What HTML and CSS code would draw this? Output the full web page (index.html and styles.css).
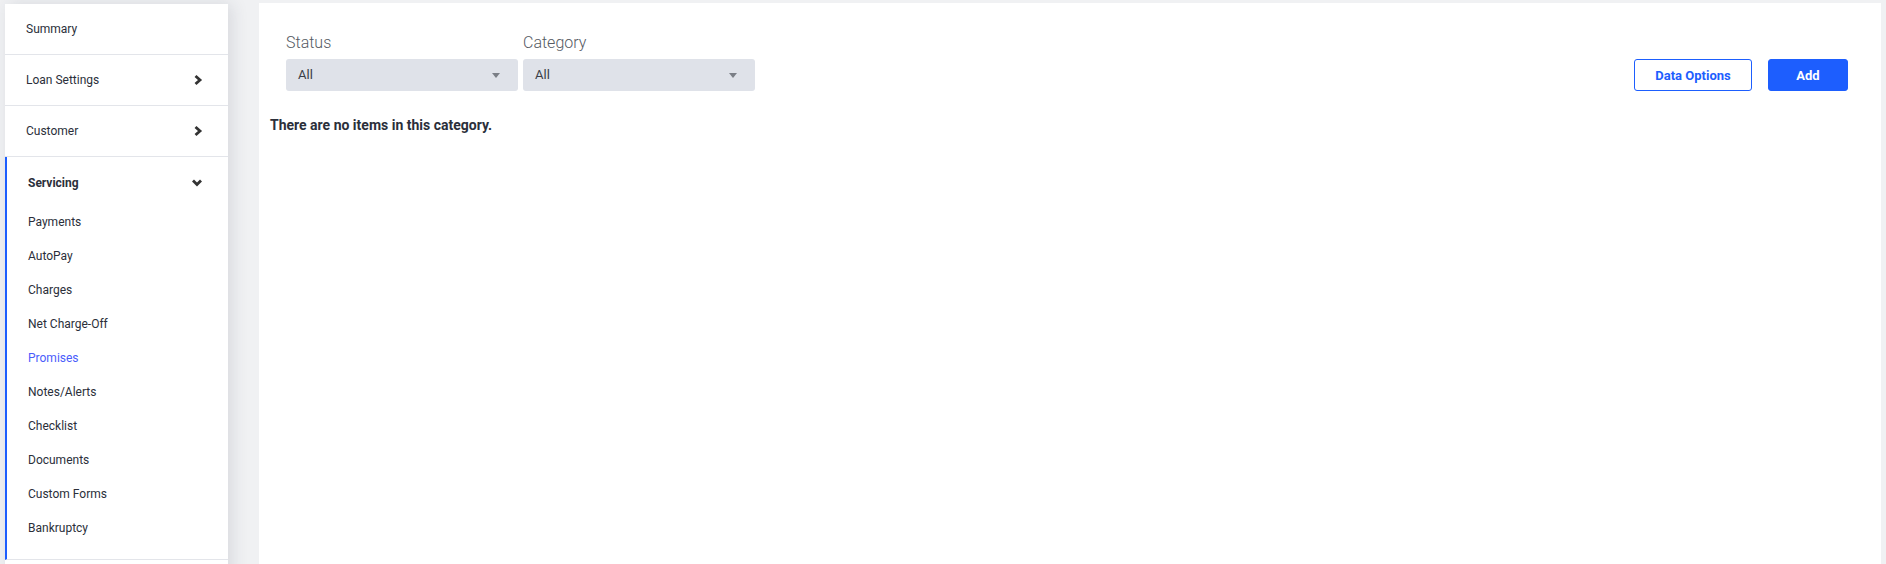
FILE: index.html
```html
<!DOCTYPE html>
<html>
<head>
    <meta charset="utf-8">
    <title>Promises</title>
    <link rel="stylesheet" href="styles.css">
</head>
<body>
    <aside class="sidebar">
        <a class="nav-item" href="#">Summary</a>
        <a class="nav-item" href="#">Loan Settings
            <svg class="chev" width="10" height="12" viewBox="0 0 10 12"><polyline points="2.5,2 7,6 2.5,10" fill="none" stroke="#333" stroke-width="2.8"/></svg>
        </a>
        <a class="nav-item" href="#">Customer
            <svg class="chev" width="10" height="12" viewBox="0 0 10 12"><polyline points="2.5,2 7,6 2.5,10" fill="none" stroke="#333" stroke-width="2.8"/></svg>
        </a>
        <div class="nav-group">
            <a class="nav-head" href="#">Servicing
                <svg class="chev" width="12" height="10" viewBox="0 0 12 10"><polyline points="2,2.5 6,6.5 10,2.5" fill="none" stroke="#333" stroke-width="2.8"/></svg>
            </a>
            <a class="sub-item" href="#">Payments</a>
            <a class="sub-item" href="#">AutoPay</a>
            <a class="sub-item" href="#">Charges</a>
            <a class="sub-item" href="#">Net Charge-Off</a>
            <a class="sub-item active" href="#">Promises</a>
            <a class="sub-item" href="#">Notes/Alerts</a>
            <a class="sub-item" href="#">Checklist</a>
            <a class="sub-item" href="#">Documents</a>
            <a class="sub-item" href="#">Custom Forms</a>
            <a class="sub-item" href="#">Bankruptcy</a>
        </div>
        <div class="nav-item"></div>
    </aside>

    <main class="panel">
        <div class="toolbar">
            <div class="filters">
                <div class="filter">
                    <label class="filter-label">Status</label>
                    <div class="select">All <span class="caret"></span></div>
                </div>
                <div class="filter">
                    <label class="filter-label">Category</label>
                    <div class="select">All <span class="caret"></span></div>
                </div>
            </div>
            <div class="actions">
                <button class="btn btn-outline">Data Options</button>
                <button class="btn btn-primary">Add</button>
            </div>
        </div>
        <p class="empty">There are no items in this category.</p>
    </main>
</body>
</html>
```

FILE: styles.css
```css
html,
body {
    height: 564px;
    overflow: hidden;
}
body {
    margin: 0;
    padding-top: 3px;
    display: flex;
    align-items: flex-start;
    gap: 31px;
    background: #f0f1f3;
    font-family: Roboto, "Liberation Sans", sans-serif;
    color: #2b2f3a;
}
a {
    color: inherit;
    text-decoration: none;
}

/* sidebar */
.sidebar {
    width: 223px;
    margin: 1px 0 0 5px;
    background: #fff;
    box-shadow: 4px 0 16px rgba(40, 50, 70, 0.12);
    flex-shrink: 0;
}
.nav-item {
    display: flex;
    align-items: center;
    justify-content: space-between;
    height: 50px;
    padding: 0 25px 0 21px;
    border-bottom: 1px solid #e3e5ea;
    font-size: 12px;
}
.nav-group {
    border-left: 2px solid #1d5efe;
    border-bottom: 1px solid #e3e5ea;
    padding-bottom: 14px;
}
.nav-head {
    box-sizing: border-box;
    display: flex;
    align-items: center;
    justify-content: space-between;
    height: 48px;
    padding: 3px 25px 0 21px;
    font-size: 12px;
    font-weight: 700;
}
.sub-item {
    display: flex;
    align-items: center;
    height: 34px;
    padding-left: 21px;
    font-size: 12px;
}
.sub-item.active {
    color: #4a5dfb;
}
.nav-group + .nav-item {
    height: 20px;
    border-bottom: none;
}

/* main panel */
.panel {
    flex: 1;
    margin-right: 5px;
    min-height: 600px;
    background: #fff;
}
.toolbar {
    display: flex;
    justify-content: space-between;
    align-items: flex-end;
    padding: 30px 33px 0 27px;
}
.filters {
    display: flex;
    gap: 5px;
}
.filter-label {
    display: block;
    margin-bottom: 7px;
    font-size: 16px;
    line-height: 19px;
    font-weight: 300;
    color: #555a63;
}
.select {
    position: relative;
    width: 220px;
    height: 32px;
    padding-left: 12px;
    line-height: 32px;
    border-radius: 3px;
    background: #dfe2e9;
    font-size: 13px;
    color: #3a3f48;
}
.caret {
    position: absolute;
    right: 18px;
    top: 14px;
    border-left: 4.5px solid transparent;
    border-right: 4.5px solid transparent;
    border-top: 5px solid #7a7e86;
}
.actions {
    display: flex;
    gap: 16px;
}
.btn {
    height: 32px;
    border-radius: 3px;
    font-family: Roboto, "Liberation Sans", sans-serif;
    font-size: 13px;
    font-weight: 700;
    cursor: pointer;
}
.btn-outline {
    width: 118px;
    background: #fff;
    border: 1px solid #1d5efe;
    color: #1d5efe;
}
.btn-primary {
    width: 80px;
    background: #1d5efe;
    border: 1px solid #1d5efe;
    color: #fff;
}
.empty {
    margin: 25px 0 0 11px;
    font-size: 14px;
    line-height: 18px;
    font-weight: 700;
    color: #2b2f3a;
}
```
